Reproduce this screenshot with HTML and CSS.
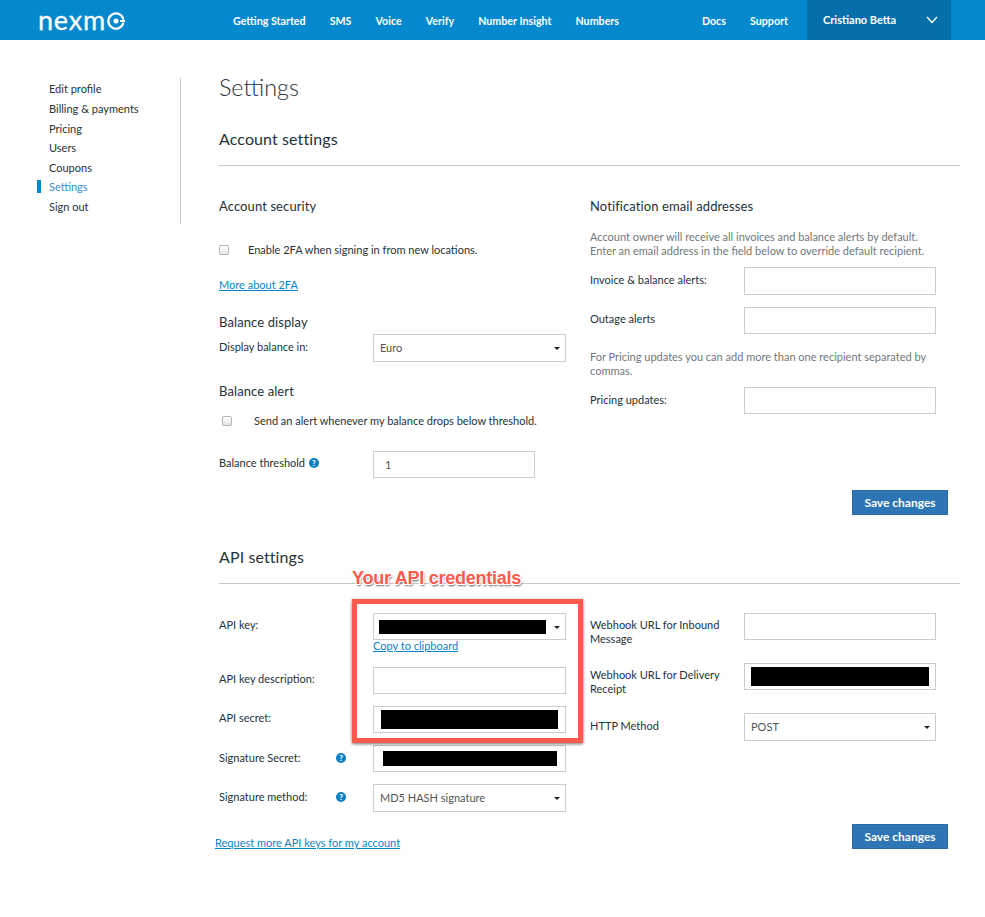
FILE: index.html
```html
<!DOCTYPE html>
<html>
<head>
    <title>Settings</title>
    <link rel="stylesheet" href="styles.css">
</head>
<body>
<header class="topbar">
    <a class="logo">nexm<svg class="logo-o" width="18" height="18" viewBox="0 0 18 18"><path d="M16.4 7.6A7.6 7.6 0 1 0 16.4 10.6" fill="none" stroke="#fff" stroke-width="2.2"/><circle cx="9" cy="9" r="2.5" fill="#fff"/><rect x="13" y="8" width="5" height="2" fill="#fff"/></svg></a>
    <nav class="nav">
        <a>Getting Started</a>
        <a>SMS</a>
        <a>Voice</a>
        <a>Verify</a>
        <a>Number Insight</a>
        <a>Numbers</a>
    </nav>
    <nav class="nav nav-right">
        <a>Docs</a>
        <a>Support</a>
    </nav>
    <div class="user">
        <span>Cristiano Betta</span>
        <svg width="12" height="8" viewBox="0 0 12 8"><polyline points="1,1 6,6.5 11,1" fill="none" stroke="#fff" stroke-width="1.3"/></svg>
    </div>
</header>

<div class="page">
    <ul class="side">
        <li>Edit profile</li>
        <li>Billing &amp; payments</li>
        <li>Pricing</li>
        <li>Users</li>
        <li>Coupons</li>
        <li class="active">Settings</li>
        <li>Sign out</li>
    </ul>

    <main class="content">
        <h1>Settings</h1>

        <h2 class="section-title first">Account settings</h2>
        <div class="columns account">
            <div class="col-left">
                <h3>Account security</h3>
                <label class="check check-2fa"><input type="checkbox">Enable 2FA when signing in from new locations.</label>
                <a class="link more-2fa">More about 2FA</a>
                <h3 class="balance-display">Balance display</h3>
                <div class="field display-in">
                    <span class="label">Display balance in:</span>
                    <div class="box select">Euro</div>
                </div>
                <h3 class="balance-alert">Balance alert</h3>
                <label class="check check-alert"><input type="checkbox">Send an alert whenever my balance drops below threshold.</label>
                <div class="field threshold">
                    <span class="label">Balance threshold <i class="help">?</i></span>
                    <input class="box short" type="text" value="1">
                </div>
            </div>
            <div class="col-right">
                <h3>Notification email addresses</h3>
                <p class="note note-owner">Account owner will receive all invoices and balance alerts by default.<br>Enter an email address in the field below to override default recipient.</p>
                <div class="field invoice">
                    <span class="label">Invoice &amp; balance alerts:</span>
                    <input class="box" type="text">
                </div>
                <div class="field outage">
                    <span class="label">Outage alerts</span>
                    <input class="box" type="text">
                </div>
                <p class="note note-pricing">For Pricing updates you can add more than one recipient separated by commas.</p>
                <div class="field pricing">
                    <span class="label">Pricing updates:</span>
                    <input class="box" type="text">
                </div>
                <button class="save save-account">Save changes</button>
            </div>
        </div>

        <h2 class="section-title api-title">API settings</h2>
        <div class="columns api">
            <div class="col-left">
                <div class="field api-key">
                    <span class="label">API key:</span>
                    <div class="box select"><b class="redact redact-key"></b></div>
                </div>
                <a class="link copy">Copy to clipboard</a>
                <div class="field api-desc">
                    <span class="label">API key description:</span>
                    <input class="box" type="text">
                </div>
                <div class="field api-secret">
                    <span class="label">API secret:</span>
                    <div class="box"><b class="redact redact-secret"></b></div>
                </div>
                <div class="field api-sig">
                    <span class="label label-help">Signature Secret: <i class="help">?</i></span>
                    <div class="box"><b class="redact redact-sig"></b></div>
                </div>
                <div class="field api-method">
                    <span class="label label-help">Signature method: <i class="help">?</i></span>
                    <div class="box select">MD5 HASH signature</div>
                </div>
                <a class="link request">Request more API keys for my account</a>
            </div>
            <div class="col-right">
                <div class="field hook">
                    <span class="label two-line">Webhook URL for Inbound Message</span>
                    <input class="box" type="text">
                </div>
                <div class="field hook hook-delivery">
                    <span class="label two-line">Webhook URL for Delivery Receipt</span>
                    <div class="box"><b class="redact redact-hook"></b></div>
                </div>
                <div class="field hook-method">
                    <span class="label">HTTP Method</span>
                    <div class="box select">POST</div>
                </div>
                <button class="save save-api">Save changes</button>
            </div>
            <div class="callout"></div>
            <div class="callout-text">Your API credentials</div>
        </div>
    </main>
</div>
</body>
</html>
```

FILE: styles.css
```css
* {
    box-sizing: border-box;
}

body {
    margin: 0;
    font-family: "Lato", "Liberation Sans", sans-serif;
    font-size: 11px;
    line-height: 14px;
    color: #26323a;
    background: #fff;
    overflow: hidden;
}

.topbar {
    display: flex;
    align-items: center;
    height: 40px;
    padding-left: 39px;
    background: #0489cf;
    color: #fff;
}

.logo {
    display: flex;
    align-items: center;
    flex: none;
    width: 194px;
    margin: -2px 0 0 -1px;
    font-size: 27px;
    line-height: 27px;
    letter-spacing: 0.8px;
    -webkit-text-stroke: 0.3px #fff;
}

.logo-o {
    margin: 3px 0 0 1px;
}

.nav {
    display: flex;
    gap: 24px;
    margin-left: 1px;
    font-weight: 700;
    font-size: 10.7px;
    padding-top: 2px;
}

.nav-right {
    margin-left: auto;
    margin-right: 19px;
}

.user {
    display: flex;
    align-items: center;
    justify-content: space-between;
    width: 144px;
    height: 40px;
    margin-right: 34px;
    padding: 0 13px 0 16px;
    background: #066fa9;
    font-weight: 700;
}

.page {
    display: flex;
    align-items: flex-start;
}

.side {
    width: 181px;
    height: 146px;
    margin: 38px 0 0;
    padding: 1.4px 0 0 49px;
    list-style: none;
    border-right: 1px solid #c8c8c8;
}

.side li {
    position: relative;
    height: 19.6px;
    line-height: 19.6px;
}

.side .active {
    color: #3a8cd0;
}

.side .active::before {
    content: "";
    position: absolute;
    left: -12px;
    top: 3px;
    width: 4px;
    height: 13px;
    background: #0489cf;
}

.content {
    width: 741px;
    margin-left: 38px;
}

h1 {
    margin: 33px 0 0;
    font-size: 23.3px;
    line-height: 28px;
    font-weight: 300;
}

.section-title {
    margin: 0;
    font-size: 16px;
    line-height: 20px;
    font-weight: 400;
    letter-spacing: 0.1px;
    border-bottom: 1px solid #c8c8c8;
}

.section-title.first {
    margin-top: 28px;
    padding-bottom: 16px;
}

.api-title {
    margin-top: 32px;
    padding-bottom: 16px;
}

.columns {
    position: relative;
    display: flex;
    gap: 24px;
}

.account {
    padding-top: 33px;
}

.api {
    padding-top: 29px;
}

.col-left {
    width: 347px;
}

.col-right {
    display: flex;
    flex-direction: column;
    width: 358px;
}

h3 {
    margin: 0;
    padding-bottom: 2px;
    font-size: 13px;
    line-height: 14px;
    font-weight: 400;
    letter-spacing: 0.1px;
}

.check {
    display: flex;
    align-items: center;
    height: 14px;
}

.check input {
    appearance: none;
    width: 10px;
    height: 10px;
    margin: 0 19px 0 0;
    border: 1px solid #b5b5b5;
    border-radius: 2px;
    background: linear-gradient(#fff, #e4e4e4);
}

.check-2fa {
    margin-top: 28px;
}

.check-alert {
    margin: 14px 0 0 3px;
}

.check-alert input {
    margin-right: 22px;
}

.link {
    display: block;
    width: max-content;
    color: #0a84c9;
    text-decoration: underline;
}

.more-2fa {
    margin-top: 21px;
}

.balance-display {
    margin-top: 23px;
}

.balance-alert {
    margin-top: 22px;
}

.field {
    display: flex;
    align-items: center;
}

.label {
    flex: none;
    width: 154px;
    margin-bottom: 2px;
}

.api-key .label,
.api-desc .label,
.api-secret .label,
.threshold .label,
.outage .label {
    margin-bottom: 4px;
}

.label-help {
    display: flex;
    justify-content: space-between;
    align-items: center;
    padding-right: 27px;
}

.hook {
    align-items: flex-start;
}

.two-line {
    margin: 5px 0 0;
    padding-right: 20px;
}

.help {
    display: inline-block;
    width: 10px;
    height: 10px;
    margin-left: 1px;
    border-radius: 50%;
    background: #0a7fc4;
    color: #fff;
    font-size: 8px;
    font-weight: 900;
    font-style: normal;
    line-height: 10px;
    text-align: center;
    vertical-align: 1px;
}

.box {
    position: relative;
    display: flex;
    align-items: center;
    width: 193px;
    height: 27px;
    padding: 0 6px;
    border: 1px solid #cccccc;
    background: #fff;
    color: #555;
    font: inherit;
    outline: none;
}

.col-right .box {
    width: 192px;
}

.select {
    height: 28px;
}

.api-key .select {
    height: 27px;
}

.invoice .box {
    height: 28px;
}

.short {
    width: 162px;
    padding-left: 11px;
}

.select::after {
    content: "";
    position: absolute;
    right: 5px;
    top: 12px;
    border-top: 3px solid #222;
    border-left: 3px solid transparent;
    border-right: 3px solid transparent;
}

.redact {
    display: block;
    height: 14px;
    background: #000;
}

.redact-key {
    width: 167px;
    margin-left: -1px;
}

.redact-secret {
    width: 177px;
    height: 19px;
    margin-left: 1px;
}

.redact-sig {
    width: 174px;
    height: 15px;
    margin-left: 3px;
}

.redact-hook {
    width: 178px;
    height: 19px;
}

.display-in {
    margin-top: 3px;
}

.threshold {
    margin-top: 23px;
}

.note {
    margin: 0;
    color: #6f787e;
}

.note-owner {
    margin-top: 15px;
}

.note-pricing {
    margin-top: 16px;
}

.invoice {
    margin-top: 9px;
}

.outage {
    margin-top: 12px;
}

.pricing {
    margin-top: 9px;
}

.save {
    align-self: flex-end;
    width: 96px;
    height: 25px;
    padding: 0;
    border: 1px solid #2a6aa5;
    background: #2e75b6;
    color: #fff;
    font: inherit;
    font-size: 12px;
    font-weight: 700;
}

.save-account {
    margin-top: 76px;
}

.copy {
    margin-left: 154px;
    padding-bottom: 2px;
    line-height: 11px;
    text-underline-offset: 1px;
}

.api-desc {
    margin-top: 14px;
}

.api-secret {
    margin-top: 12px;
}

.api-sig {
    margin-top: 12px;
}

.api-method {
    margin-top: 12px;
}

.request {
    margin: 24px 0 0 -4px;
}

.hook-delivery {
    margin-top: 17px;
}

.hook-method {
    margin-top: 17px;
}

.save-api {
    margin-top: 83px;
}

/* annotation drawn over the form */
.callout {
    position: absolute;
    left: 133px;
    top: 15px;
    width: 231px;
    height: 144px;
    border: 5px solid #fb5a4c;
    box-shadow: 0 1px 3px rgba(0, 0, 0, 0.55);
}

.callout-text {
    position: absolute;
    left: 133px;
    top: -16px;
    font-family: "Liberation Sans", sans-serif;
    font-size: 18px;
    line-height: 20px;
    font-weight: 700;
    letter-spacing: -0.25px;
    color: #fb5a4c;
    text-shadow: -1px 0 0 #fff, 1px 0 0 #fff, 0 -1px 0 #fff, 0 1px 0 #fff, -1px -1px 0 #fff, 1px 1px 0 #fff, -1px 1px 0 #fff, 1px -1px 0 #fff, 1px 2px 2px rgba(0, 0, 0, 0.7);
}
```
